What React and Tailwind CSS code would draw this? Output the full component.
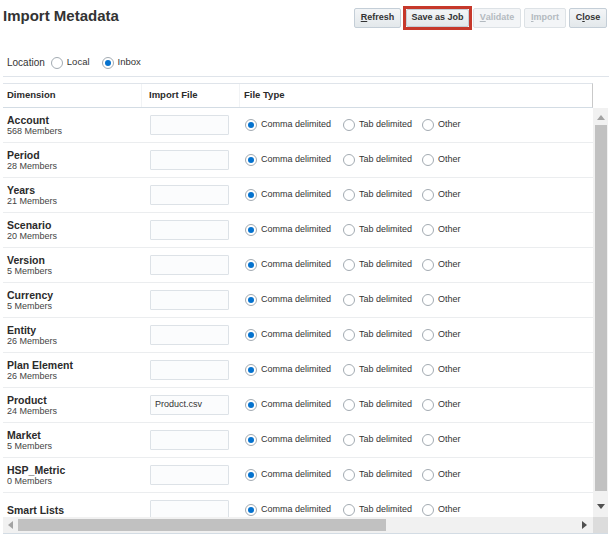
import React from "react";

const dims = [
  { name: "Account", members: "568 Members" },
  { name: "Period", members: "28 Members" },
  { name: "Years", members: "21 Members" },
  { name: "Scenario", members: "20 Members" },
  { name: "Version", members: "5 Members" },
  { name: "Currency", members: "5 Members" },
  { name: "Entity", members: "26 Members" },
  { name: "Plan Element", members: "26 Members" },
  { name: "Product", members: "24 Members", file: "Product.csv" },
  { name: "Market", members: "5 Members" },
  { name: "HSP_Metric", members: "0 Members" },
  { name: "Smart Lists" },
];

function Radio({ checked }) {
  return (
    <span className="flex h-[12px] w-[12px] shrink-0 items-center justify-center rounded-full border border-[#a3abb2] bg-white">
      {checked && <span className="h-[6px] w-[6px] rounded-full bg-[#0572ce]" />}
    </span>
  );
}

function Btn({ children, width, disabled }) {
  return (
    <button
      className={
        disabled
          ? "flex h-[20px] items-center justify-center rounded-[2px] border border-[#dde2e6] bg-[#f3f5f7] text-[9px] font-bold text-[#b3bac0]"
          : "flex h-[20px] items-center justify-center rounded-[2px] border border-[#c4ced7] bg-linear-to-b from-[#f3f5f7] to-[#e3e8eb] text-[9px] font-bold text-[#333]"
      }
      style={{ width }}
    >
      {children}
    </button>
  );
}

export default function App() {
  return (
    <div className="h-[539px] w-[616px] overflow-hidden bg-white font-['Liberation_Sans',Arial,sans-serif] text-[#333]">
      {/* title bar */}
      <div className="flex h-[49px] items-start justify-between pr-[9px]">
        <h1 className="ml-[3px] mt-[6px] text-[15px] font-bold leading-[20px] text-[#333]">Import Metadata</h1>
        <div className="mt-[5px] flex h-[25px] items-center">
          <Btn width={47}>
            <span className="underline">R</span>efresh
          </Btn>
          <div className="ml-[2px] border-[3px] border-[#c6382b]">
            <button className="flex h-[18px] w-[63px] items-center justify-center rounded-[2px] border border-[#c4ced7] bg-linear-to-b from-[#f3f5f7] to-[#e3e8eb] text-[9px] font-bold text-[#333]">
              Save as Job
            </button>
          </div>
          <div className="ml-[1px]">
            <Btn width={48} disabled>
              <span className="underline">V</span>alidate
            </Btn>
          </div>
          <div className="ml-[3px]">
            <Btn width={42} disabled>
              <span className="underline">I</span>mport
            </Btn>
          </div>
          <div className="ml-[3px]">
            <Btn width={38}>
              C<span className="underline">l</span>ose
            </Btn>
          </div>
        </div>
      </div>

      {/* location */}
      <div className="mx-[3px] flex h-[28px] w-[606px] items-center border-b border-[#dfe4ea] pl-[4px] text-[9.5px]">
        <span className="text-[10px]">Location</span>
        <span className="ml-[6px]"><Radio /></span>
        <span className="ml-[4px]">Local</span>
        <span className="ml-[12px]"><Radio checked /></span>
        <span className="ml-[4px]">Inbox</span>
      </div>

      {/* table */}
      <div className="mx-[3px] mt-[6px] w-[605px]">
        <div className="flex">
          <div className="flex h-[25px] w-[590px] items-center border-y border-r border-t-[#dfe4ea] border-b-[#d3dce4] border-r-[#c9c9c9] text-[9.5px] font-bold text-[#2b2b2b]">
            <div className="flex h-full w-[139px] items-center border-r border-[#f1f3f5] pl-[4px]">Dimension</div>
            <div className="flex h-full w-[98px] items-center border-r border-[#f1f3f5] pl-[7px]">Import File</div>
            <div className="pl-[4px]">File Type</div>
          </div>
        </div>

        <div className="flex h-[409px]">
          <div className="w-[590px] overflow-hidden">
            {dims.map((d) => (
              <div key={d.name} className="flex h-[35px] shrink-0 items-center border-b border-[#ebedef]">
                <div className="flex w-[139px] flex-col justify-center pl-[4px]">
                  <span className="text-[10.5px] font-bold leading-[11px] text-[#2b2b2b]">{d.name}</span>
                  {d.members && <span className="text-[9px] leading-[10px] text-[#444]">{d.members}</span>}
                </div>
                <div className="w-[98px] pl-[8px]">
                  <div className="flex h-[20px] w-[79px] items-center rounded-[1px] border border-[#dde2e7] bg-[#fbfcfd] pl-[4px] text-[9px]">
                    {d.file}
                  </div>
                </div>
                <div className="flex items-center pl-[5px] text-[9px]">
                  <div className="flex w-[98px] items-center">
                    <Radio checked />
                    <span className="ml-[4px]">Comma delimited</span>
                  </div>
                  <div className="flex w-[79px] items-center">
                    <Radio />
                    <span className="ml-[4px]">Tab delimited</span>
                  </div>
                  <div className="flex items-center">
                    <Radio />
                    <span className="ml-[4px]">Other</span>
                  </div>
                </div>
              </div>
            ))}
          </div>
          {/* vertical scrollbar */}
          <div className="flex w-[15px] flex-col items-center bg-[#f1f1f1]">
            <svg width="8" height="5" viewBox="0 0 8 5" className="mt-[7px]">
              <path d="M0 5 L4 0 L8 5 Z" fill="#a3a3a3" />
            </svg>
            <div className="ml-[1px] mt-[5px] h-[366px] w-[12px] bg-[#c1c1c1]" />
            <svg width="8" height="5" viewBox="0 0 8 5" className="mt-[13px]">
              <path d="M0 0 L8 0 L4 5 Z" fill="#505050" />
            </svg>
          </div>
        </div>

        {/* horizontal scrollbar */}
        <div className="flex h-[17px] border-b border-[#d3dce4]">
          <div className="flex w-[590px] items-center bg-[#f1f1f1]">
            <svg width="5" height="8" viewBox="0 0 5 8" className="ml-[5px]">
              <path d="M5 0 L0 4 L5 8 Z" fill="#a3a3a3" />
            </svg>
            <div className="ml-[5px] h-[12px] w-[368px] bg-[#c1c1c1]" />
            <svg width="5" height="8" viewBox="0 0 5 8" className="ml-auto mr-[6px]">
              <path d="M0 0 L5 4 L0 8 Z" fill="#505050" />
            </svg>
          </div>
          <div className="w-[15px] bg-[#dcdcdc]" />
        </div>
      </div>
    </div>
  );
}
